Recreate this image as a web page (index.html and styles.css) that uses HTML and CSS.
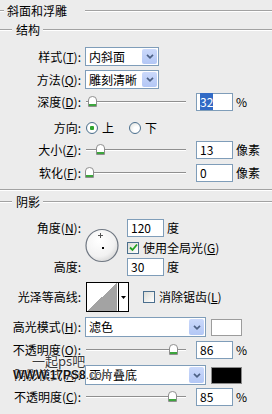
FILE: index.html
```html
<!DOCTYPE html>
<html lang="zh">
<head>
    <meta charset="UTF-8">
    <title>斜面和浮雕</title>
    <link rel="stylesheet" href="styles.css">
</head>
<body>
<div class="panel">
    <div class="legend head"><span class="rule lead-s"></span><span class="legend-text wide">斜面和浮雕</span><span class="rule"></span></div>
    <div class="legend sub"><span class="rule lead"></span><span class="legend-text">结构</span><span class="rule"></span></div>

    <div class="row sel first">
        <span class="label">样式(<u>T</u>):</span>
        <div class="select small"><span class="val">内斜面</span><span class="drop"><svg width="8" height="5" viewBox="0 0 8 5"><path d="M1 0.8 L4 3.8 L7 0.8" stroke="#4d6185" stroke-width="1.7" fill="none"/></svg></span></div>
    </div>
    <div class="row sel">
        <span class="label">方法(<u>Q</u>):</span>
        <div class="select small"><span class="val">雕刻清晰</span><span class="drop"><svg width="8" height="5" viewBox="0 0 8 5"><path d="M1 0.8 L4 3.8 L7 0.8" stroke="#4d6185" stroke-width="1.7" fill="none"/></svg></span></div>
    </div>
    <div class="row num">
        <span class="label">深度(<u>D</u>):</span>
        <div class="slider"><span class="thumb" style="left:2px"><svg width="9" height="11" viewBox="0 0 9 11"><path d="M0.5 10.5 V4 Q0.5 0.5 4.5 0.5 Q8.5 0.5 8.5 4 V10.5 Z" fill="#fff" stroke="#8e8e8e"/><rect x="1" y="8" width="7" height="2" fill="#3da53d"/></svg></span></div>
        <span class="field"><span class="hl">32</span></span><span class="unit">%</span>
    </div>
    <div class="row radios">
        <span class="label">方向:</span>
        <span class="radio on"></span><span class="opt">上</span>
        <span class="radio second"></span><span class="opt">下</span>
    </div>
    <div class="row num r-size">
        <span class="label">大小(<u>Z</u>):</span>
        <div class="slider"><span class="thumb" style="left:10px"><svg width="9" height="11" viewBox="0 0 9 11"><path d="M0.5 10.5 V4 Q0.5 0.5 4.5 0.5 Q8.5 0.5 8.5 4 V10.5 Z" fill="#fff" stroke="#8e8e8e"/><rect x="1" y="8" width="7" height="2" fill="#3da53d"/></svg></span></div>
        <span class="field">13</span><span class="unit">像素</span>
    </div>
    <div class="row num r-soft">
        <span class="label">软化(<u>F</u>):</span>
        <div class="slider"><span class="thumb" style="left:-1px"><svg width="9" height="11" viewBox="0 0 9 11"><path d="M0.5 10.5 V4 Q0.5 0.5 4.5 0.5 Q8.5 0.5 8.5 4 V10.5 Z" fill="#fff" stroke="#8e8e8e"/><rect x="1" y="8" width="7" height="2" fill="#3da53d"/></svg></span></div>
        <span class="field">0</span><span class="unit">像素</span>
    </div>

    <div class="sep"></div>
    <div class="legend shadow"><span class="rule lead"></span><span class="legend-text">阴影</span><span class="rule"></span></div>

    <div class="angle">
        <span class="label a1">角度(<u>N</u>):</span>
        <svg class="dial" width="34" height="35" viewBox="0 0 34 35">
            <defs>
                <radialGradient id="dg" cx="0.4" cy="0.35" r="0.7">
                    <stop offset="0" stop-color="#ffffff"/>
                    <stop offset="0.7" stop-color="#f2f2f2"/>
                    <stop offset="1" stop-color="#d6d6d6"/>
                </radialGradient>
            </defs>
            <circle cx="17" cy="17.5" r="16" fill="url(#dg)" stroke="#6f7782" stroke-width="1.2"/>
            <path d="M13 7.5 H18 M15.5 5 V10" stroke="#555" stroke-width="1"/>
            <rect x="17" y="19" width="2" height="2" fill="#000"/>
        </svg>
        <span class="a-in a1"><span class="field first">120</span><span class="unit">度</span></span>
        <span class="a-in a2"><span class="check on"><svg width="9" height="9" viewBox="0 0 9 9"><path d="M1 4.5 L3.5 7 L8 1.5" stroke="#21a121" stroke-width="1.8" fill="none"/></svg></span><span class="opt">使用全局光(<u>G</u>)</span></span>
        <span class="label a3">高度:</span>
        <span class="a-in a3"><span class="field first">30</span><span class="unit">度</span></span>
    </div>

    <div class="row contour-row">
        <span class="label">光泽等高线:</span>
        <div class="contour"><span class="curve"></span><span class="cdrop"><svg width="5" height="3" viewBox="0 0 5 3"><path d="M0 0 H5 L2.5 3 Z" fill="#000"/></svg></span></div>
        <span class="check"></span><span class="opt">消除锯齿(<u>L</u>)</span>
    </div>

    <div class="row sel r-hi">
        <span class="label">高光模式(<u>H</u>):</span>
        <div class="select large"><span class="val">滤色</span><span class="drop"><svg width="8" height="5" viewBox="0 0 8 5"><path d="M1 0.8 L4 3.8 L7 0.8" stroke="#4d6185" stroke-width="1.7" fill="none"/></svg></span></div>
        <span class="swatch white"></span>
    </div>
    <div class="row num r-op1">
        <span class="label">不透明度(<u>O</u>):</span>
        <div class="slider"><span class="thumb" style="left:83px"><svg width="9" height="11" viewBox="0 0 9 11"><path d="M0.5 10.5 V4 Q0.5 0.5 4.5 0.5 Q8.5 0.5 8.5 4 V10.5 Z" fill="#fff" stroke="#8e8e8e"/><rect x="1" y="8" width="7" height="2" fill="#3da53d"/></svg></span></div>
        <span class="field">86</span><span class="unit">%</span>
    </div>
    <div class="row sel r-sh">
        <span class="label">阴影模式(<u>A</u>):</span>
        <div class="select large"><span class="val">正片叠底</span><span class="drop"><svg width="8" height="5" viewBox="0 0 8 5"><path d="M1 0.8 L4 3.8 L7 0.8" stroke="#4d6185" stroke-width="1.7" fill="none"/></svg></span></div>
        <span class="swatch black"></span>
    </div>
    <div class="row num r-op2">
        <span class="label">不透明度(<u>C</u>):</span>
        <div class="slider"><span class="thumb" style="left:82px"><svg width="9" height="11" viewBox="0 0 9 11"><path d="M0.5 10.5 V4 Q0.5 0.5 4.5 0.5 Q8.5 0.5 8.5 4 V10.5 Z" fill="#fff" stroke="#8e8e8e"/><rect x="1" y="8" width="7" height="2" fill="#3da53d"/></svg></span></div>
        <span class="field">85</span><span class="unit">%</span>
    </div>

    <div class="watermark">
        <div class="wm-top">一起ps吧</div>
        <div class="wm-url"><b>WWW.17PS8</b>.com</div>
    </div>
</div>
</body>
</html>
```

FILE: styles.css
```css
body {
    margin: 0;
    background-color: #ececec;
    font-family: "Noto Sans CJK SC", sans-serif;
    font-size: 12px;
    color: #000;
}
.panel {
    position: relative;
    width: 272px;
    height: 414px;
    overflow: hidden;
}
u {
    text-decoration-thickness: 1px;
    text-underline-offset: 1px;
}

/* group titles */
.legend {
    display: flex;
    align-items: center;
    height: 14px;
    line-height: 14px;
}
.legend .rule {
    flex: 1;
    height: 0;
    border-top: 1px solid #a2a2a2;
    border-bottom: 1px solid #fff;
}
.legend .lead {
    flex: none;
    width: 12px;
}
.legend .lead-s {
    flex: none;
    width: 4px;
}
.legend-text {
    margin: 0 3px 0 4px;
}
.legend-text.wide {
    margin: 0 18px 0 3px;
}
.head { margin-top: 4px; }
.sub { margin-top: 5px; }
.shadow { margin-top: 4px; }
.sep {
    margin-top: 7px;
    border-top: 1px solid #a2a2a2;
    border-bottom: 1px solid #fff;
}

/* rows */
.row {
    display: flex;
    align-items: center;
    line-height: 14px;
}
.label {
    flex: none;
    width: 81px;
    text-align: right;
    white-space: nowrap;
}
.sel { margin-top: 4px; height: 19px; }
.sel.first { margin-top: 10px; }
.num { margin-top: 4px; height: 18px; }
.radios { margin-top: 10px; height: 14px; }
.r-size { margin-top: 6px; }
.r-soft { margin-top: 5px; }
.contour-row { margin-top: 6px; height: 30px; }
.r-hi { margin-top: 5px; height: 20px; }
.r-op1 { margin-top: 4px; }
.r-sh { margin-top: 6px; height: 20px; }
.r-op2 { margin-top: 3px; }

/* combo boxes */
.select {
    display: flex;
    align-items: center;
    box-sizing: border-box;
    height: 100%;
    margin-left: 4px;
    padding-left: 3px;
    background-color: #fff;
    border: 1px solid #7f9db9;
}
.select.small { width: 74px; }
.select.large { width: 121px; }
.select .val { flex: 1; white-space: nowrap; }
.drop {
    display: flex;
    align-items: center;
    justify-content: center;
    width: 15px;
    height: calc(100% - 2px);
    margin-right: 1px;
    background: linear-gradient(#cbd9fb, #b3c7f5);
    border-radius: 2px;
}

/* sliders */
.slider {
    position: relative;
    flex: none;
    width: 100px;
    height: 12px;
    margin-left: 5px;
}
.slider::before {
    content: "";
    position: absolute;
    left: 0;
    right: 0;
    top: 5px;
    border-top: 1px solid #8f8f8f;
    border-bottom: 1px solid #fff;
}
.thumb {
    position: absolute;
    top: 0;
    line-height: 0;
}

/* text fields */
.field {
    flex: none;
    box-sizing: border-box;
    width: 37px;
    height: 18px;
    margin-left: 10px;
    padding-left: 3px;
    line-height: 16px;
    background-color: #fff;
    border: 1px solid #7f9db9;
}
.field.first { margin-left: 0; }
.hl {
    background-color: #316ac5;
    color: #fff;
}
.unit { margin-left: 3px; }

/* radio and check */
.radio {
    flex: none;
    box-sizing: border-box;
    width: 12px;
    height: 12px;
    margin-left: 5px;
    border: 1px solid #4b6f8e;
    border-radius: 50%;
    background: radial-gradient(circle at 65% 65%, #fff 30%, #dcdcd6);
}
.radio.on {
    background: radial-gradient(circle, #2fa52f 0 2px, #fff 2.5px 4px, #e4e4dc);
}
.radio.second { margin-left: 15px; }
.opt { margin-left: 4px; white-space: nowrap; }
.check {
    flex: none;
    display: flex;
    align-items: center;
    justify-content: center;
    box-sizing: border-box;
    width: 12px;
    height: 12px;
    margin-left: 14px;
    border: 1px solid #4b6f8e;
    background: linear-gradient(135deg, #dcdcd6, #fff);
}
.check.on { margin-left: 0; }

/* angle block */
.angle {
    display: grid;
    grid-template-columns: 81px 46px 1fr;
    grid-template-rows: 18px 21px 18px;
    margin-top: 10px;
    line-height: 14px;
}
.angle .label { align-self: center; }
.a1 { grid-row: 1; }
.a2 { grid-row: 2; }
.a3 { grid-row: 3; }
.angle .label.a1, .angle .label.a3 { grid-column: 1; }
.a-in {
    grid-column: 3;
    display: flex;
    align-items: center;
}
.a-in.a2 .opt { margin-left: 4px; }
.dial {
    grid-column: 2;
    grid-row: 1 / 4;
    margin: 9px 0 0 4px;
}

/* contour picker */
.contour {
    display: flex;
    box-sizing: border-box;
    height: 30px;
    margin-left: 5px;
    border: 1px solid #000;
}
.curve {
    width: 30px;
    background: linear-gradient(to bottom right, #fff 50%, #a3a3a3 50%);
    border-right: 1px solid #fff;
}
.cdrop {
    display: flex;
    align-items: center;
    justify-content: center;
    width: 9px;
    background-color: #fff;
    border-left: 1px solid #000;
}

/* colour swatches */
.swatch {
    flex: none;
    box-sizing: border-box;
    width: 31px;
    height: 17px;
    margin-left: 5px;
    border: 1px solid #9c9c9c;
}
.swatch.white { background-color: #fff; }
.swatch.black { background-color: #000; border-color: #8a8a8a; }

/* site watermark */
.watermark {
    position: absolute;
    left: 13px;
    top: 354px;
    line-height: 14px;
    color: #3a3a3a;
}
.wm-top {
    margin-left: 19px;
    font-size: 13px;
    text-shadow: 0 0 2px #fff, 0 0 2px #fff;
}
.wm-url {
    font-family: "Liberation Sans", sans-serif;
    font-size: 12px;
    text-shadow: 0 0 1px #fff, 0 0 2px #fff;
}
.wm-url b { color: #151515; }
```
